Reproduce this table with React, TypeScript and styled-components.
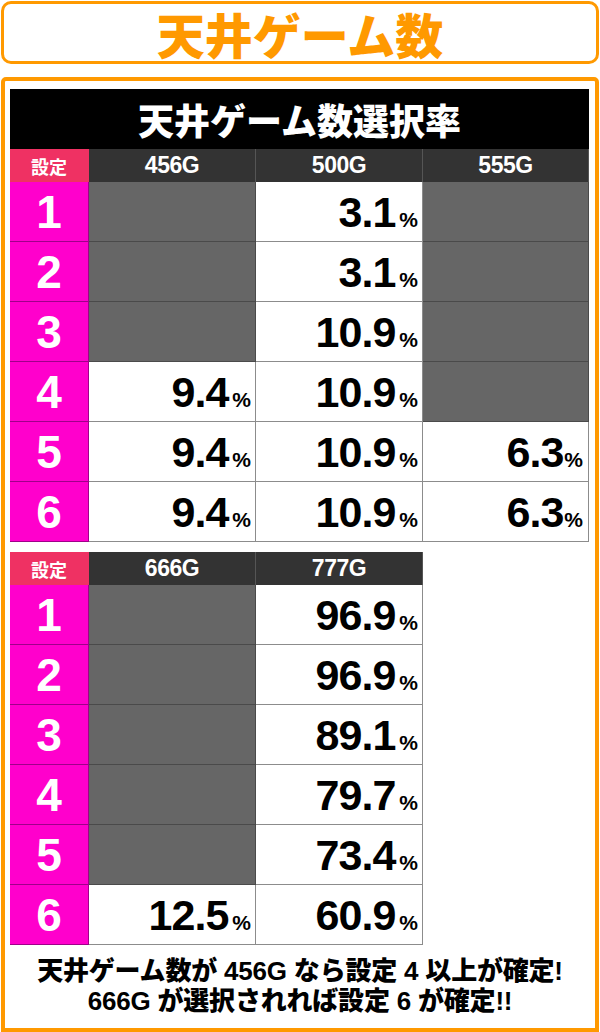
import styled, { createGlobalStyle } from "styled-components";

const GlobalStyle = createGlobalStyle`
  body {
    margin: 0;
    background: #fff;
    font-family: "Liberation Sans", "Noto Sans CJK JP", sans-serif;
  }
`;

const Page = styled.div`
  width: 600px;
  height: 1032px;
  box-sizing: border-box;
  padding: 1px 1px 0;
  display: flex;
  flex-direction: column;
  overflow: hidden;
`;

const TitleBox = styled.div`
  height: 63px;
  box-sizing: border-box;
  border: 3px solid #f90;
  border-radius: 10px;
  display: flex;
  align-items: center;
  justify-content: center;
  color: #f90;
  font-family: "Noto Sans CJK JP", sans-serif;
  font-weight: 900;
  font-size: 48px;
  line-height: 52px;
`;

const Frame = styled.div`
  flex: 1;
  margin-top: 13px;
  box-sizing: border-box;
  border: 4px solid #f90;
  border-radius: 5px 5px 0 0;
  padding: 8px 5px 0;
  display: flex;
  flex-direction: column;
`;

const Table = styled.div<{ $cols: string }>`
  display: grid;
  grid-template-columns: ${(p) => p.$cols};
  align-self: flex-start;
`;

const Caption = styled.div`
  grid-column: 1 / -1;
  height: 60px;
  background: #000;
  color: #fff;
  display: flex;
  align-items: center;
  justify-content: center;
  font-family: "Noto Sans CJK JP", sans-serif;
  font-weight: 900;
  font-size: 36px;
`;

const HeadCell = styled.div<{ $key?: boolean }>`
  height: 33px;
  box-sizing: border-box;
  background: ${(p) => (p.$key ? "#ef3163" : "#333")};
  border-right: 1px solid ${(p) => (p.$key ? "#ef3163" : "#555")};
  color: #fff;
  display: flex;
  align-items: center;
  justify-content: center;
  font-weight: 700;
  font-size: ${(p) => (p.$key ? "18px" : "23px")};
  letter-spacing: ${(p) => (p.$key ? "0" : "-0.5px")};
  font-family: ${(p) =>
    p.$key ? `"Noto Sans CJK JP", sans-serif` : `"Liberation Sans", sans-serif`};

  &:last-child {
    border-right: 0;
  }
`;

const SettingCell = styled.div`
  height: 60px;
  box-sizing: border-box;
  background: #f0c;
  border-right: 1px solid #a0008a;
  border-bottom: 1px solid #a0008a;
  color: #fff;
  display: flex;
  align-items: center;
  justify-content: center;
  font-weight: 700;
  font-size: 46px;
  line-height: 1;
`;

const ValueCell = styled.div<{ $empty?: boolean; $tight?: boolean }>`
  height: 60px;
  box-sizing: border-box;
  background: ${(p) => (p.$empty ? "#666" : "#fff")};
  border-right: 1px solid ${(p) => (p.$empty ? "#4a4a4a" : "#8c8c8c")};
  border-bottom: 1px solid ${(p) => (p.$empty ? "#4a4a4a" : "#8c8c8c")};
  display: flex;
  align-items: center;
  justify-content: flex-end;
  padding: 8px ${(p) => (p.$tight ? "5px" : "4px")} 0 0;
  color: #000;
`;

const Num = styled.span`
  font-weight: 700;
  font-size: 43px;
  letter-spacing: -1px;
  line-height: 44px;
`;

const Pct = styled.span<{ $tight?: boolean }>`
  font-weight: 700;
  font-size: 21px;
  letter-spacing: 0;
  margin-left: ${(p) => (p.$tight ? "1px" : "4px")};
`;

const Spacer = styled.div`
  height: 10px;
`;

const Note = styled.div`
  flex: 1;
  display: flex;
  flex-direction: column;
  align-items: center;
  justify-content: center;
  font-weight: 900;
  font-size: 26px;
  line-height: 30px;
  letter-spacing: -0.2px;
  color: #000;
  padding-bottom: 2px;
`;

type Row = (string | null)[];

const table1: Row[] = [
  [null, "3.1", null],
  [null, "3.1", null],
  [null, "10.9", null],
  ["9.4", "10.9", null],
  ["9.4", "10.9", "6.3"],
  ["9.4", "10.9", "6.3"],
];

const table2: Row[] = [
  [null, "96.9"],
  [null, "96.9"],
  [null, "89.1"],
  [null, "79.7"],
  [null, "73.4"],
  ["12.5", "60.9"],
];

function RateTable({
  cols,
  heads,
  rows,
  caption,
  tightCol,
}: {
  cols: string;
  heads: string[];
  rows: Row[];
  caption?: string;
  tightCol?: number;
}) {
  return (
    <Table $cols={cols}>
      {caption ? <Caption>{caption}</Caption> : null}
      <HeadCell $key>設定</HeadCell>
      {heads.map((h) => (
        <HeadCell key={h}>{h}</HeadCell>
      ))}
      {rows.map((row, i) => [
        <SettingCell key={"s" + i}>{i + 1}</SettingCell>,
        ...row.map((v, j) => (
          <ValueCell key={i + "-" + j} $empty={v === null} $tight={j === tightCol}>
            {v ? (
              <Num>
                {v}
                <Pct $tight={j === tightCol}>%</Pct>
              </Num>
            ) : null}
          </ValueCell>
        )),
      ])}
    </Table>
  );
}

export default function App() {
  return (
    <>
      <GlobalStyle />
      <Page>
        <TitleBox>天井ゲーム数</TitleBox>
        <Frame>
          <RateTable
            cols="79px 167px 167px 166px"
            caption="天井ゲーム数選択率"
            heads={["456G", "500G", "555G"]}
            rows={table1}
            tightCol={2}
          />
          <Spacer />
          <RateTable cols="79px 167px 167px" heads={["666G", "777G"]} rows={table2} />
          <Note>
            <div>天井ゲーム数が 456G なら設定 4 以上が確定!</div>
            <div>666G が選択されれば設定 6 が確定!!</div>
          </Note>
        </Frame>
      </Page>
    </>
  );
}
